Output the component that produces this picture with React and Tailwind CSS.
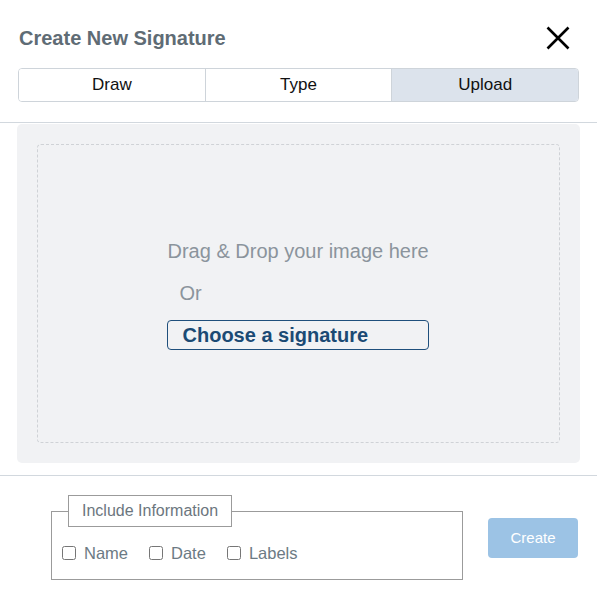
import { useState } from "react";

const tabs = ["Draw", "Type", "Upload"];
const fields = ["Name", "Date", "Labels"];

export default function App() {
  const [active, setActive] = useState("Upload");

  return (
    <div className="h-[610px] w-[597px] bg-white font-['Liberation_Sans',Arial,sans-serif]">
      {/* Header */}
      <div className="flex items-center justify-between pl-[19px] pr-[27px] pt-[26px]">
        <h2 className="text-[20px] font-bold leading-6 text-[#5f6c75]">Create New Signature</h2>
        <button className="text-black" aria-label="Close">
          <svg width="24" height="24" viewBox="0 0 24 24" fill="none" stroke="currentColor" strokeWidth="2.6">
            <path d="M1.5 1.5 22.5 22.5M22.5 1.5 1.5 22.5" />
          </svg>
        </button>
      </div>

      {/* Tabs */}
      <div className="mx-[18px] mt-[18px] flex h-[34px] overflow-hidden rounded-[4px] border border-[#ced4da]">
        {tabs.map((t, i) => (
          <button
            key={t}
            onClick={() => setActive(t)}
            className={`flex-1 text-[17px] text-[#111] ${i > 0 ? "border-l border-[#ced4da]" : ""} ${
              active === t ? "bg-[#dce3ec]" : "bg-white"
            }`}
          >
            {t}
          </button>
        ))}
      </div>

      <div className="mt-[20px] h-px bg-[#d2d8de]" />

      {/* Upload area */}
      <div className="mx-[17px] mt-px rounded-[5px] bg-[#f1f2f4] p-[20px]">
        <div className="flex h-[299px] flex-col items-center rounded-[4px] border border-dashed border-[#cfd2d6] pt-[94px]">
          <div className="mr-[2px] w-[262px]">
            <p className="whitespace-nowrap pl-px text-[20px] leading-6 text-[#8b949c]">Drag &amp; Drop your image here</p>
            <p className="mt-[18px] pl-[13px] text-[20px] leading-6 text-[#8b949c]">Or</p>
            <button className="mt-[15px] h-[30px] w-[262px] rounded-[4px] border border-[#1f4f7c] pl-[15px] text-left text-[20px] font-bold leading-6 text-[#1b4a74]">
              Choose a signature
            </button>
          </div>
        </div>
      </div>

      <div className="mt-[12px] h-px bg-[#d2d8de]" />

      {/* Footer */}
      <div className="flex items-start pl-[51px] pr-[19px] pt-[19px]">
        <fieldset className="h-[85px] w-[412px] border border-[#9b9b9b] px-[10px]">
          <legend className="ml-[6px] border border-[#9b9b9b] px-[13px] py-[5px] text-[16px] leading-5 text-[#6c767e]">
            Include Information
          </legend>
          <div className="mt-[14px] flex items-center">
            {fields.map((f) => (
              <label key={f} className="mr-[21px] flex items-center text-[16.5px] text-[#6c7a84]">
                <input type="checkbox" className="mr-[8px] h-[14px] w-[14px] accent-[#1b4a74]" />
                {f}
              </label>
            ))}
          </div>
        </fieldset>
        <button className="ml-auto mt-[23px] h-[40px] w-[90px] rounded-[4px] bg-[#9cc3e5] text-[15px] text-white">
          Create
        </button>
      </div>
    </div>
  );
}
